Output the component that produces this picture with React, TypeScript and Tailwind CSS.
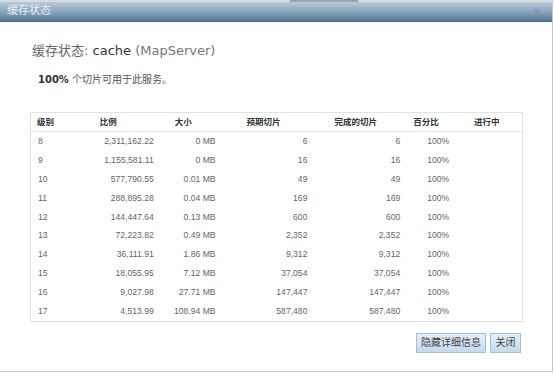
import React from 'react';

const rows = [
  ['8', '2,311,162.22', '0 MB', '6', '6', '100%'],
  ['9', '1,155,581.11', '0 MB', '16', '16', '100%'],
  ['10', '577,790.55', '0.01 MB', '49', '49', '100%'],
  ['11', '288,895.28', '0.04 MB', '169', '169', '100%'],
  ['12', '144,447.64', '0.13 MB', '600', '600', '100%'],
  ['13', '72,223.82', '0.49 MB', '2,352', '2,352', '100%'],
  ['14', '36,111.91', '1.86 MB', '9,312', '9,312', '100%'],
  ['15', '18,055.95', '7.12 MB', '37,054', '37,054', '100%'],
  ['16', '9,027.98', '27.71 MB', '147,447', '147,447', '100%'],
  ['17', '4,513.99', '108.94 MB', '587,480', '587,480', '100%'],
];

const cjk = "font-['DejaVu_Sans','Noto_Sans_CJK_SC',sans-serif]";
const num = "font-['Liberation_Sans','Noto_Sans_CJK_SC',sans-serif]";

export default function App() {
  return (
    <div className="w-[554px] h-[374px] bg-white overflow-hidden">
      {/* underlying page strip */}
      <div className="flex h-[2px] bg-[#d6dbe0]">
        <div className="w-[290px]" />
        <div className="w-[68px] bg-[#9aa4ae]" />
      </div>

      <div className="w-[553px] h-[370px] border-r border-b border-[#c9c9c9] flex flex-col">
        {/* Title bar */}
        <div className="h-[20px] flex items-center justify-between pl-[7px] pr-[12px] bg-gradient-to-b from-[#b9cad9] via-[#8ba6bd] to-[#56789a] border-b border-[#46688a]">
          <span className={`${cjk} text-[11px] text-[#e6edf3]`}>缓存状态</span>
          <span className={`${num} text-[11px] font-bold text-[#7f94a8] leading-none`}>x</span>
        </div>

        {/* Body */}
        <div className="flex-1 flex flex-col px-[30px]">
          <div className={`${cjk} mt-[20px] ml-[2px] text-[13px] text-[#666] leading-[18px]`}>
            缓存状态: <span className="text-[#333]">cache</span> <span className="text-[#777]">(MapServer)</span>
          </div>

          <div className={`${cjk} mt-[13px] ml-[8px] text-[10px] text-[#555] leading-[14px]`}>
            <span className="font-semibold text-[#333]">100%</span> 个切片可用于此服务。
          </div>

          {/* Table */}
          <div className="mt-[25px] w-[493px] border border-[#e2e2e2]">
            <div className={`${cjk} flex h-[19px] items-center border-b border-[#e2e2e2] text-[8.5px] font-bold text-[#333]`}>
              <div className="w-[62px] pl-[6px]">级别</div>
              <div className="w-[68px] pl-[7px]">比例</div>
              <div className="w-[62px] pl-[14px]">大小</div>
              <div className="w-[92px] pl-[24px]">预期切片</div>
              <div className="w-[93px] pl-[20px]">完成的切片</div>
              <div className="w-[60px] pl-[6px]">百分比</div>
              <div className="w-[55px] pl-[7px]">进行中</div>
            </div>
            {rows.map((r) => (
              <div key={r[0]} className={`${num} flex h-[18.9px] items-center text-[8.6px] text-[#666]`}>
                <div className="w-[62px] pl-[7px]">{r[0]}</div>
                <div className="w-[68px] pr-[7px] text-right">{r[1]}</div>
                <div className="w-[62px] pr-[7px] text-right">{r[2]}</div>
                <div className="w-[92px] pr-[7px] text-right">{r[3]}</div>
                <div className="w-[93px] pr-[7px] text-right">{r[4]}</div>
                <div className="w-[60px] pl-[20px]">{r[5]}</div>
                <div className="w-[55px]" />
              </div>
            ))}
          </div>

          {/* Buttons */}
          <div className="mt-[11px] w-[491px] flex justify-end gap-[4px]">
            <button className={`${cjk} h-[20px] w-[70px] text-[10px] text-[#444] border border-[#a4bfdb] bg-gradient-to-b from-[#e6eff8] to-[#c5daef]`}>
              隐藏详细信息
            </button>
            <button className={`${cjk} h-[20px] w-[31px] text-[10px] text-[#444] border border-[#a4bfdb] bg-gradient-to-b from-[#e6eff8] to-[#c5daef]`}>
              关闭
            </button>
          </div>
        </div>
      </div>
    </div>
  );
}
